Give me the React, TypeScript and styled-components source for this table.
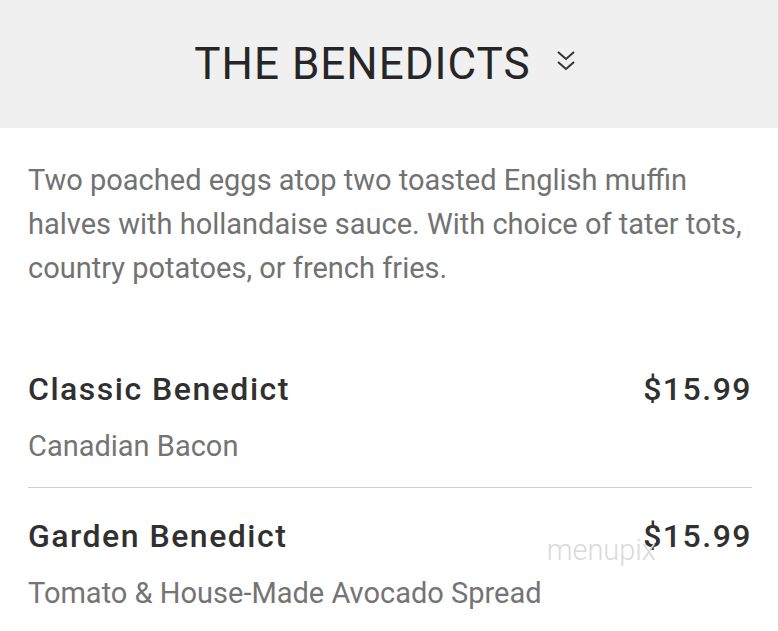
import styled, { createGlobalStyle } from 'styled-components';

const GlobalStyle = createGlobalStyle`
  html, body {
    margin: 0;
    padding: 0;
    background: #ffffff;
  }
  body {
    font-family: Roboto, "Liberation Sans", sans-serif;
  }
`;

const items = [
  { name: 'Classic Benedict', price: '$15.99', note: 'Canadian Bacon' },
  { name: 'Garden Benedict', price: '$15.99', note: 'Tomato & House-Made Avocado Spread' },
];

export default function App() {
  return (
    <Page>
      <GlobalStyle />
      <Header>
        <Title>THE BENEDICTS</Title>
        <Chevrons viewBox="0 0 20 26" aria-hidden>
          <path d="M2 4l8 7 8-7M2 14l8 7 8-7" />
        </Chevrons>
      </Header>
      <Body>
        <Description>
          Two poached eggs atop two toasted English muffin halves with hollandaise sauce. With
          choice of tater tots, country potatoes, or french fries.
        </Description>
        <List>
          {items.map((item, i) => (
            <Item key={item.name} last={i === items.length - 1}>
              <ItemHead>
                <ItemName>{item.name}</ItemName>
                <Price>
                  {i === 1 && <Watermark>menupix</Watermark>}
                  {item.price}
                </Price>
              </ItemHead>
              <Note>{item.note}</Note>
            </Item>
          ))}
        </List>
      </Body>
    </Page>
  );
}

const Page = styled.div`
  width: 778px;
  height: 631px;
  overflow: hidden;
  background: #fff;
`;

const Header = styled.header`
  height: 128px;
  background: #f0f0f0;
  display: flex;
  align-items: center;
  justify-content: center;
  gap: 25px;
  padding-right: 8px;
  box-sizing: border-box;
`;

const Title = styled.h1`
  margin: 0;
  font-size: 44px;
  font-weight: 400;
  letter-spacing: 1px;
  color: #262626;
`;

const Chevrons = styled.svg`
  width: 20px;
  height: 26px;
  fill: none;
  stroke: #333;
  stroke-width: 2;
  margin-top: -6px;
`;

const Body = styled.main`
  padding: 0 26px 0 28px;
`;

const Description = styled.p`
  margin: 30px 0 0;
  font-size: 29px;
  line-height: 44px;
  color: #727272;
`;

const List = styled.div`
  margin-top: 80px;
`;

const Item = styled.div<{ last?: boolean }>`
  padding-bottom: ${({ last }) => (last ? '0' : '24px')};
  border-bottom: ${({ last }) => (last ? 'none' : '1px solid #cfcfcf')};
  margin-bottom: 29px;
`;

const ItemHead = styled.div`
  display: flex;
  justify-content: space-between;
  align-items: baseline;
`;

const ItemName = styled.span`
  font-size: 32px;
  font-weight: 500;
  letter-spacing: 1.5px;
  color: #303030;
`;

const Price = styled.span`
  position: relative;
  font-size: 32px;
  font-weight: 500;
  letter-spacing: 1.5px;
  color: #303030;
`;

const Watermark = styled.span`
  position: absolute;
  right: 96px;
  top: 16px;
  font-size: 29px;
  font-weight: 300;
  letter-spacing: 0;
  color: #dadada;
`;

const Note = styled.div`
  margin-top: 21px;
  font-size: 29px;
  color: #747474;
`;
